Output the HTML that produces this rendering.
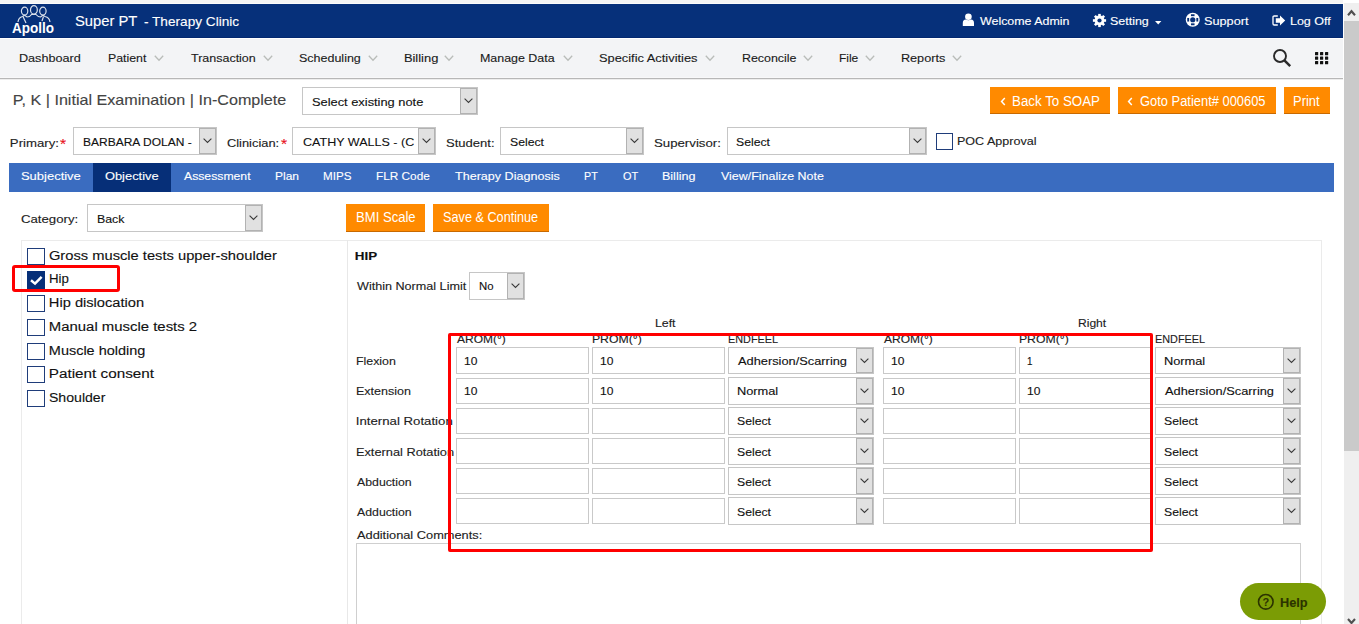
<!DOCTYPE html>
<html><head><meta charset="utf-8"><style>
html,body{margin:0;padding:0;width:1359px;height:624px;overflow:hidden;background:#fff;position:relative;font-family:'Liberation Sans',sans-serif}
div{white-space:nowrap}
</style></head><body>
<div style="position:absolute;left:0px;top:0px;width:1343px;height:3px;background:#f4f4f4"></div>
<div style="position:absolute;left:0px;top:3px;width:1343px;height:1px;background:#fbfbfb"></div>
<div style="position:absolute;left:0px;top:4px;width:1343px;height:34px;background:#06307a"></div>
<div style="position:absolute;left:0px;top:37px;width:1343px;height:1px;background:#032870"></div>
<div style="position:absolute;left:0px;top:38px;width:1343px;height:1px;background:#ffffff"></div>
<div style="position:absolute;left:0px;top:39px;width:1343px;height:38px;background:#f3f4f6"></div>
<div style="position:absolute;left:0px;top:77px;width:1343px;height:1px;background:#f8f8f9"></div>
<div style="position:absolute;left:0px;top:78px;width:1343px;height:1px;background:#b7b7b7"></div>
<div style="position:absolute;left:0px;top:79px;width:1343px;height:1px;background:#ededed"></div>
<svg style="position:absolute;left:0;top:0" width="70" height="38" viewBox="0 0 70 38">
<g fill="none" stroke="#fff" stroke-width="1.2" opacity="0.85">
<ellipse cx="24.6" cy="11.1" rx="3.2" ry="4"/><ellipse cx="33.9" cy="9.9" rx="3.4" ry="4.2"/><ellipse cx="42.9" cy="11.1" rx="3.2" ry="4"/>
<path d="M18 22 Q18.5 17.5 22.5 16.5 L24.6 15.3 L27 17 Q30 17 31.5 14.5 L36 14.5 Q38 17 40.5 17 L42.9 15.3 L45 16.5 Q49.5 17.5 50 22"/>
<path d="M23 16.5 L26 23 M43.5 16.5 L42 21"/>
</g>
<text x="12" y="33" textLength="42" lengthAdjust="spacingAndGlyphs" font-family="Liberation Sans" font-weight="bold" font-size="15.5" fill="#fff">Apollo</text>
</svg>
<svg style="position:absolute;left:962px;top:13px" width="13" height="14" viewBox="0 0 13 14"><circle cx="6.4" cy="3.7" r="3.3" fill="#fff"/><path d="M0.8 13 L0.8 10 Q0.8 6.8 3.8 6.6 Q6.4 8 9 6.6 Q12 6.8 12 10 L12 13 Z" fill="#fff"/></svg>
<svg style="position:absolute;left:1092px;top:12.5px" width="15" height="15" viewBox="-7.5 -7.5 15 15"><g fill="#fff"><rect x="-1.3" y="-6.6" width="2.6" height="3" transform="rotate(0)"/><rect x="-1.3" y="-6.6" width="2.6" height="3" transform="rotate(45)"/><rect x="-1.3" y="-6.6" width="2.6" height="3" transform="rotate(90)"/><rect x="-1.3" y="-6.6" width="2.6" height="3" transform="rotate(135)"/><rect x="-1.3" y="-6.6" width="2.6" height="3" transform="rotate(180)"/><rect x="-1.3" y="-6.6" width="2.6" height="3" transform="rotate(225)"/><rect x="-1.3" y="-6.6" width="2.6" height="3" transform="rotate(270)"/><rect x="-1.3" y="-6.6" width="2.6" height="3" transform="rotate(315)"/><circle r="4.9"/></g><circle r="2.1" fill="#06307a"/></svg>
<svg style="position:absolute;left:1154.5px;top:20.5px" width="7" height="4"><path d="M0 0 L6.4 0 L3.2 3.4 Z" fill="#fff"/></svg>
<svg style="position:absolute;left:1184.5px;top:12.2px" width="15.5" height="15.5" viewBox="-7.75 -7.75 15.5 15.5"><circle r="7.0" fill="#fff"/><circle r="2.6" fill="#06307a"/><rect x="-1.8" y="-5.5" width="3.6" height="1.9" fill="#06307a" transform="rotate(0)"/><rect x="-1.8" y="-5.5" width="3.6" height="1.9" fill="#06307a" transform="rotate(90)"/><rect x="-1.8" y="-5.5" width="3.6" height="1.9" fill="#06307a" transform="rotate(180)"/><rect x="-1.8" y="-5.5" width="3.6" height="1.9" fill="#06307a" transform="rotate(270)"/></svg>
<svg style="position:absolute;left:1272px;top:14.5px" width="14" height="11" viewBox="0 0 14 11"><path d="M5.8 1 L2.2 1 Q1 1 1 2.2 L1 8.8 Q1 10 2.2 10 L5.8 10" fill="none" stroke="#fff" stroke-width="1.3"/><path d="M3.8 3.3 L8 3.3 L8 0.4 L13.2 5.5 L8 10.6 L8 7.7 L3.8 7.7 Z" fill="#fff"/></svg>
<svg style="position:absolute;left:1272px;top:48px" width="21" height="20" viewBox="0 0 21 20"><circle cx="8" cy="8" r="6" fill="none" stroke="#2a2a2a" stroke-width="1.9"/><path d="M12.4 12.4 L18.2 18.2" stroke="#2a2a2a" stroke-width="2.5"/></svg>
<svg style="position:absolute;left:1315px;top:52px" width="14" height="14"><rect x="0" y="0.0" width="3.2" height="3.2" rx="0.5" fill="#111"/><rect x="0" y="4.5" width="3.2" height="3.2" rx="0.5" fill="#111"/><rect x="0" y="9.0" width="3.2" height="3.2" rx="0.5" fill="#111"/><rect x="5" y="0.0" width="3.2" height="3.2" rx="0.5" fill="#111"/><rect x="5" y="4.5" width="3.2" height="3.2" rx="0.5" fill="#111"/><rect x="5" y="9.0" width="3.2" height="3.2" rx="0.5" fill="#111"/><rect x="10" y="0.0" width="3.2" height="3.2" rx="0.5" fill="#111"/><rect x="10" y="4.5" width="3.2" height="3.2" rx="0.5" fill="#111"/><rect x="10" y="9.0" width="3.2" height="3.2" rx="0.5" fill="#111"/></svg>
<svg style="position:absolute;left:153.8px;top:55px" width="11" height="7"><path d="M0.8 0.8 L5 5.2 L9.2 0.8" fill="none" stroke="#b9bcb9" stroke-width="1.3"/></svg>
<svg style="position:absolute;left:263px;top:55px" width="11" height="7"><path d="M0.8 0.8 L5 5.2 L9.2 0.8" fill="none" stroke="#b9bcb9" stroke-width="1.3"/></svg>
<svg style="position:absolute;left:367.8px;top:55px" width="11" height="7"><path d="M0.8 0.8 L5 5.2 L9.2 0.8" fill="none" stroke="#b9bcb9" stroke-width="1.3"/></svg>
<svg style="position:absolute;left:444.4px;top:55px" width="11" height="7"><path d="M0.8 0.8 L5 5.2 L9.2 0.8" fill="none" stroke="#b9bcb9" stroke-width="1.3"/></svg>
<svg style="position:absolute;left:563.2px;top:55px" width="11" height="7"><path d="M0.8 0.8 L5 5.2 L9.2 0.8" fill="none" stroke="#b9bcb9" stroke-width="1.3"/></svg>
<svg style="position:absolute;left:705px;top:55px" width="11" height="7"><path d="M0.8 0.8 L5 5.2 L9.2 0.8" fill="none" stroke="#b9bcb9" stroke-width="1.3"/></svg>
<svg style="position:absolute;left:803px;top:55px" width="11" height="7"><path d="M0.8 0.8 L5 5.2 L9.2 0.8" fill="none" stroke="#b9bcb9" stroke-width="1.3"/></svg>
<svg style="position:absolute;left:865px;top:55px" width="11" height="7"><path d="M0.8 0.8 L5 5.2 L9.2 0.8" fill="none" stroke="#b9bcb9" stroke-width="1.3"/></svg>
<svg style="position:absolute;left:951.8px;top:55px" width="11" height="7"><path d="M0.8 0.8 L5 5.2 L9.2 0.8" fill="none" stroke="#b9bcb9" stroke-width="1.3"/></svg>
<div style="position:absolute;left:302px;top:87px;width:174px;height:26px;border:1px solid #c6c6c6;background:#fff"></div>
<div style="position:absolute;left:460px;top:88px;width:15px;height:24px;border:1px solid #b2b2b2;background:#e1e1e1"></div>
<svg style="position:absolute;left:464px;top:98.4px" width="10" height="6"><path d="M0.6 0.6 L4.5 4.5 L8.4 0.6" fill="none" stroke="#3a3a3a" stroke-width="1.1"/></svg>
<div style="position:absolute;left:990px;top:87px;width:120px;height:26px;background:#ff8a00;border-bottom:1px solid #c86900"></div>
<svg style="position:absolute;left:999.5px;top:96.9px" width="7" height="9"><path d="M4.8 1 L1.6 4.5 L4.8 8" fill="none" stroke="#fff" stroke-width="1.5"/></svg>
<div style="position:absolute;left:1118px;top:87px;width:158px;height:26px;background:#ff8a00;border-bottom:1px solid #c86900"></div>
<svg style="position:absolute;left:1127px;top:96.9px" width="7" height="9"><path d="M4.8 1 L1.6 4.5 L4.8 8" fill="none" stroke="#fff" stroke-width="1.5"/></svg>
<div style="position:absolute;left:1284px;top:87px;width:46px;height:26px;background:#ff8a00;border-bottom:1px solid #c86900"></div>
<div style="position:absolute;left:73px;top:127px;width:142px;height:26px;border:1px solid #c6c6c6;background:#fff"></div>
<div style="position:absolute;left:199px;top:128px;width:15px;height:24px;border:1px solid #b2b2b2;background:#e1e1e1"></div>
<svg style="position:absolute;left:203px;top:138.4px" width="10" height="6"><path d="M0.6 0.6 L4.5 4.5 L8.4 0.6" fill="none" stroke="#3a3a3a" stroke-width="1.1"/></svg>
<div style="position:absolute;left:292px;top:127px;width:142px;height:26px;border:1px solid #c6c6c6;background:#fff"></div>
<div style="position:absolute;left:418px;top:128px;width:15px;height:24px;border:1px solid #b2b2b2;background:#e1e1e1"></div>
<svg style="position:absolute;left:422px;top:138.4px" width="10" height="6"><path d="M0.6 0.6 L4.5 4.5 L8.4 0.6" fill="none" stroke="#3a3a3a" stroke-width="1.1"/></svg>
<div style="position:absolute;left:293px;top:128px;width:121px;height:26px;overflow:hidden"><div style="position:absolute;left:9.5px;top:1px;white-space:nowrap;font-family:'Liberation Sans';font-size:11.5px;line-height:26px;color:#111;transform:scaleX(1.09);transform-origin:0 0;-webkit-text-stroke:0.08px currentColor">CATHY WALLS - (CW)</div></div>
<div style="position:absolute;left:500px;top:127px;width:142px;height:26px;border:1px solid #c6c6c6;background:#fff"></div>
<div style="position:absolute;left:626px;top:128px;width:15px;height:24px;border:1px solid #b2b2b2;background:#e1e1e1"></div>
<svg style="position:absolute;left:630px;top:138.4px" width="10" height="6"><path d="M0.6 0.6 L4.5 4.5 L8.4 0.6" fill="none" stroke="#3a3a3a" stroke-width="1.1"/></svg>
<div style="position:absolute;left:727px;top:127px;width:198px;height:26px;border:1px solid #c6c6c6;background:#fff"></div>
<div style="position:absolute;left:909px;top:128px;width:15px;height:24px;border:1px solid #b2b2b2;background:#e1e1e1"></div>
<svg style="position:absolute;left:913px;top:138.4px" width="10" height="6"><path d="M0.6 0.6 L4.5 4.5 L8.4 0.6" fill="none" stroke="#3a3a3a" stroke-width="1.1"/></svg>
<div style="position:absolute;left:936px;top:133px;width:14.5px;height:14.5px;border:1.25px solid #1f3d7a;background:#fff"></div>
<div style="position:absolute;left:9px;top:163px;width:1325px;height:29px;background:#3a6cc0"></div>
<div style="position:absolute;left:93px;top:163px;width:78px;height:29px;background:#062f78"></div>
<div style="position:absolute;left:87px;top:204px;width:174px;height:26px;border:1px solid #c6c6c6;background:#fff"></div>
<div style="position:absolute;left:245px;top:205px;width:15px;height:24px;border:1px solid #b2b2b2;background:#e1e1e1"></div>
<svg style="position:absolute;left:249px;top:215.4px" width="10" height="6"><path d="M0.6 0.6 L4.5 4.5 L8.4 0.6" fill="none" stroke="#3a3a3a" stroke-width="1.1"/></svg>
<div style="position:absolute;left:346px;top:204px;width:79px;height:27px;background:#ff8a00;border-bottom:1px solid #c86900"></div>
<div style="position:absolute;left:433px;top:204px;width:116px;height:27px;background:#ff8a00;border-bottom:1px solid #c86900"></div>
<div style="position:absolute;left:21px;top:240px;width:1301px;height:1px;background:#ebebeb"></div>
<div style="position:absolute;left:21px;top:240px;width:1px;height:384px;background:#ebebeb"></div>
<div style="position:absolute;left:347px;top:240px;width:1px;height:384px;background:#e8e8e8"></div>
<div style="position:absolute;left:1321px;top:240px;width:1px;height:384px;background:#ebebeb"></div>
<div style="position:absolute;left:27px;top:248px;width:15.5px;height:14.5px;border:1.25px solid #1f3d7a;background:#fff"></div>
<div style="position:absolute;left:27px;top:271px;width:18px;height:18px;background:#062f78"></div>
<svg style="position:absolute;left:27px;top:271px" width="18" height="17"><path d="M4 9.3 L8 12.6 L14.6 5.8" fill="none" stroke="#fff" stroke-width="2.5"/></svg>
<div style="position:absolute;left:27px;top:295px;width:15.5px;height:14.5px;border:1.25px solid #1f3d7a;background:#fff"></div>
<div style="position:absolute;left:27px;top:319px;width:15.5px;height:14.5px;border:1.25px solid #1f3d7a;background:#fff"></div>
<div style="position:absolute;left:27px;top:343px;width:15.5px;height:14.5px;border:1.25px solid #1f3d7a;background:#fff"></div>
<div style="position:absolute;left:27px;top:366px;width:15.5px;height:14.5px;border:1.25px solid #1f3d7a;background:#fff"></div>
<div style="position:absolute;left:27px;top:390px;width:15.5px;height:14.5px;border:1.25px solid #1f3d7a;background:#fff"></div>
<div style="position:absolute;left:469px;top:272px;width:54px;height:26px;border:1px solid #c6c6c6;background:#fff"></div>
<div style="position:absolute;left:507px;top:273px;width:15px;height:24px;border:1px solid #b2b2b2;background:#e1e1e1"></div>
<svg style="position:absolute;left:511px;top:283.4px" width="10" height="6"><path d="M0.6 0.6 L4.5 4.5 L8.4 0.6" fill="none" stroke="#3a3a3a" stroke-width="1.1"/></svg>
<div style="position:absolute;left:456px;top:347px;width:131px;height:25px;border:1px solid #c9c9c9;background:#fff"></div>
<div style="position:absolute;left:592px;top:347px;width:131px;height:25px;border:1px solid #c9c9c9;background:#fff"></div>
<div style="position:absolute;left:728px;top:347px;width:144px;height:25px;border:1px solid #c6c6c6;background:#fff"></div>
<div style="position:absolute;left:856px;top:348px;width:15px;height:23px;border:1px solid #b2b2b2;background:#e1e1e1"></div>
<svg style="position:absolute;left:860px;top:357.9px" width="10" height="6"><path d="M0.6 0.6 L4.5 4.5 L8.4 0.6" fill="none" stroke="#3a3a3a" stroke-width="1.1"/></svg>
<div style="position:absolute;left:883px;top:347px;width:131px;height:25px;border:1px solid #c9c9c9;background:#fff"></div>
<div style="position:absolute;left:1019px;top:347px;width:131px;height:25px;border:1px solid #c9c9c9;background:#fff"></div>
<div style="position:absolute;left:1155px;top:347px;width:144px;height:25px;border:1px solid #c6c6c6;background:#fff"></div>
<div style="position:absolute;left:1283px;top:348px;width:15px;height:23px;border:1px solid #b2b2b2;background:#e1e1e1"></div>
<svg style="position:absolute;left:1287px;top:357.9px" width="10" height="6"><path d="M0.6 0.6 L4.5 4.5 L8.4 0.6" fill="none" stroke="#3a3a3a" stroke-width="1.1"/></svg>
<div style="position:absolute;left:456px;top:378px;width:131px;height:24px;border:1px solid #c9c9c9;background:#fff"></div>
<div style="position:absolute;left:592px;top:378px;width:131px;height:24px;border:1px solid #c9c9c9;background:#fff"></div>
<div style="position:absolute;left:728px;top:377px;width:144px;height:26px;border:1px solid #c6c6c6;background:#fff"></div>
<div style="position:absolute;left:856px;top:378px;width:15px;height:24px;border:1px solid #b2b2b2;background:#e1e1e1"></div>
<svg style="position:absolute;left:860px;top:388.4px" width="10" height="6"><path d="M0.6 0.6 L4.5 4.5 L8.4 0.6" fill="none" stroke="#3a3a3a" stroke-width="1.1"/></svg>
<div style="position:absolute;left:883px;top:378px;width:131px;height:24px;border:1px solid #c9c9c9;background:#fff"></div>
<div style="position:absolute;left:1019px;top:378px;width:131px;height:24px;border:1px solid #c9c9c9;background:#fff"></div>
<div style="position:absolute;left:1155px;top:377px;width:144px;height:26px;border:1px solid #c6c6c6;background:#fff"></div>
<div style="position:absolute;left:1283px;top:378px;width:15px;height:24px;border:1px solid #b2b2b2;background:#e1e1e1"></div>
<svg style="position:absolute;left:1287px;top:388.4px" width="10" height="6"><path d="M0.6 0.6 L4.5 4.5 L8.4 0.6" fill="none" stroke="#3a3a3a" stroke-width="1.1"/></svg>
<div style="position:absolute;left:456px;top:408px;width:131px;height:24px;border:1px solid #c9c9c9;background:#fff"></div>
<div style="position:absolute;left:592px;top:408px;width:131px;height:24px;border:1px solid #c9c9c9;background:#fff"></div>
<div style="position:absolute;left:728px;top:407px;width:144px;height:26px;border:1px solid #c6c6c6;background:#fff"></div>
<div style="position:absolute;left:856px;top:408px;width:15px;height:24px;border:1px solid #b2b2b2;background:#e1e1e1"></div>
<svg style="position:absolute;left:860px;top:418.4px" width="10" height="6"><path d="M0.6 0.6 L4.5 4.5 L8.4 0.6" fill="none" stroke="#3a3a3a" stroke-width="1.1"/></svg>
<div style="position:absolute;left:883px;top:408px;width:131px;height:24px;border:1px solid #c9c9c9;background:#fff"></div>
<div style="position:absolute;left:1019px;top:408px;width:131px;height:24px;border:1px solid #c9c9c9;background:#fff"></div>
<div style="position:absolute;left:1155px;top:407px;width:144px;height:26px;border:1px solid #c6c6c6;background:#fff"></div>
<div style="position:absolute;left:1283px;top:408px;width:15px;height:24px;border:1px solid #b2b2b2;background:#e1e1e1"></div>
<svg style="position:absolute;left:1287px;top:418.4px" width="10" height="6"><path d="M0.6 0.6 L4.5 4.5 L8.4 0.6" fill="none" stroke="#3a3a3a" stroke-width="1.1"/></svg>
<div style="position:absolute;left:456px;top:438px;width:131px;height:24px;border:1px solid #c9c9c9;background:#fff"></div>
<div style="position:absolute;left:592px;top:438px;width:131px;height:24px;border:1px solid #c9c9c9;background:#fff"></div>
<div style="position:absolute;left:728px;top:437px;width:144px;height:26px;border:1px solid #c6c6c6;background:#fff"></div>
<div style="position:absolute;left:856px;top:438px;width:15px;height:24px;border:1px solid #b2b2b2;background:#e1e1e1"></div>
<svg style="position:absolute;left:860px;top:448.4px" width="10" height="6"><path d="M0.6 0.6 L4.5 4.5 L8.4 0.6" fill="none" stroke="#3a3a3a" stroke-width="1.1"/></svg>
<div style="position:absolute;left:883px;top:438px;width:131px;height:24px;border:1px solid #c9c9c9;background:#fff"></div>
<div style="position:absolute;left:1019px;top:438px;width:131px;height:24px;border:1px solid #c9c9c9;background:#fff"></div>
<div style="position:absolute;left:1155px;top:437px;width:144px;height:26px;border:1px solid #c6c6c6;background:#fff"></div>
<div style="position:absolute;left:1283px;top:438px;width:15px;height:24px;border:1px solid #b2b2b2;background:#e1e1e1"></div>
<svg style="position:absolute;left:1287px;top:448.4px" width="10" height="6"><path d="M0.6 0.6 L4.5 4.5 L8.4 0.6" fill="none" stroke="#3a3a3a" stroke-width="1.1"/></svg>
<div style="position:absolute;left:456px;top:468px;width:131px;height:24px;border:1px solid #c9c9c9;background:#fff"></div>
<div style="position:absolute;left:592px;top:468px;width:131px;height:24px;border:1px solid #c9c9c9;background:#fff"></div>
<div style="position:absolute;left:728px;top:467px;width:144px;height:26px;border:1px solid #c6c6c6;background:#fff"></div>
<div style="position:absolute;left:856px;top:468px;width:15px;height:24px;border:1px solid #b2b2b2;background:#e1e1e1"></div>
<svg style="position:absolute;left:860px;top:478.4px" width="10" height="6"><path d="M0.6 0.6 L4.5 4.5 L8.4 0.6" fill="none" stroke="#3a3a3a" stroke-width="1.1"/></svg>
<div style="position:absolute;left:883px;top:468px;width:131px;height:24px;border:1px solid #c9c9c9;background:#fff"></div>
<div style="position:absolute;left:1019px;top:468px;width:131px;height:24px;border:1px solid #c9c9c9;background:#fff"></div>
<div style="position:absolute;left:1155px;top:467px;width:144px;height:26px;border:1px solid #c6c6c6;background:#fff"></div>
<div style="position:absolute;left:1283px;top:468px;width:15px;height:24px;border:1px solid #b2b2b2;background:#e1e1e1"></div>
<svg style="position:absolute;left:1287px;top:478.4px" width="10" height="6"><path d="M0.6 0.6 L4.5 4.5 L8.4 0.6" fill="none" stroke="#3a3a3a" stroke-width="1.1"/></svg>
<div style="position:absolute;left:456px;top:498px;width:131px;height:24px;border:1px solid #c9c9c9;background:#fff"></div>
<div style="position:absolute;left:592px;top:498px;width:131px;height:24px;border:1px solid #c9c9c9;background:#fff"></div>
<div style="position:absolute;left:728px;top:497px;width:144px;height:26px;border:1px solid #c6c6c6;background:#fff"></div>
<div style="position:absolute;left:856px;top:498px;width:15px;height:24px;border:1px solid #b2b2b2;background:#e1e1e1"></div>
<svg style="position:absolute;left:860px;top:508.4px" width="10" height="6"><path d="M0.6 0.6 L4.5 4.5 L8.4 0.6" fill="none" stroke="#3a3a3a" stroke-width="1.1"/></svg>
<div style="position:absolute;left:883px;top:498px;width:131px;height:24px;border:1px solid #c9c9c9;background:#fff"></div>
<div style="position:absolute;left:1019px;top:498px;width:131px;height:24px;border:1px solid #c9c9c9;background:#fff"></div>
<div style="position:absolute;left:1155px;top:497px;width:144px;height:26px;border:1px solid #c6c6c6;background:#fff"></div>
<div style="position:absolute;left:1283px;top:498px;width:15px;height:24px;border:1px solid #b2b2b2;background:#e1e1e1"></div>
<svg style="position:absolute;left:1287px;top:508.4px" width="10" height="6"><path d="M0.6 0.6 L4.5 4.5 L8.4 0.6" fill="none" stroke="#3a3a3a" stroke-width="1.1"/></svg>
<div style="position:absolute;left:356px;top:543px;width:945px;height:100px;border:1px solid #cfcfcf;background:#fff;box-sizing:border-box"></div>
<div style="position:absolute;left:75.15px;top:11.95px;font-size:14px;line-height:18px;font-weight:normal;color:#fff;transform:scaleX(1.0552);transform-origin:0.75px 0;-webkit-text-stroke:0.12px currentColor;">Super PT</div>
<div style="position:absolute;left:143.90px;top:12.80px;font-size:13px;line-height:17px;font-weight:normal;color:#fff;transform:scaleX(1.0478);transform-origin:0.50px 0;-webkit-text-stroke:0.12px currentColor;">- Therapy Clinic</div>
<div style="position:absolute;left:979.50px;top:14.32px;font-size:11.5px;line-height:15px;font-weight:normal;color:#fff;transform:scaleX(1.0796);transform-origin:0.00px 0;-webkit-text-stroke:0.12px currentColor;">Welcome Admin</div>
<div style="position:absolute;left:1110.30px;top:14.32px;font-size:11.5px;line-height:15px;font-weight:normal;color:#fff;transform:scaleX(1.0849);transform-origin:0.50px 0;-webkit-text-stroke:0.12px currentColor;">Setting</div>
<div style="position:absolute;left:1204.00px;top:14.32px;font-size:11.5px;line-height:15px;font-weight:normal;color:#fff;transform:scaleX(1.1069);transform-origin:0.50px 0;-webkit-text-stroke:0.12px currentColor;">Support</div>
<div style="position:absolute;left:1290.00px;top:14.32px;font-size:11.5px;line-height:15px;font-weight:normal;color:#fff;transform:scaleX(1.0904);transform-origin:1.00px 0;-webkit-text-stroke:0.12px currentColor;">Log Off</div>
<div style="position:absolute;left:18.90px;top:51.32px;font-size:11.5px;line-height:15px;font-weight:normal;color:#1b1b1b;transform:scaleX(1.1009);transform-origin:1.00px 0;-webkit-text-stroke:0.12px currentColor;">Dashboard</div>
<div style="position:absolute;left:107.80px;top:51.32px;font-size:11.5px;line-height:15px;font-weight:normal;color:#1b1b1b;transform:scaleX(1.0734);transform-origin:1.00px 0;-webkit-text-stroke:0.12px currentColor;">Patient</div>
<div style="position:absolute;left:190.85px;top:51.32px;font-size:11.5px;line-height:15px;font-weight:normal;color:#1b1b1b;transform:scaleX(1.0860);transform-origin:0.25px 0;-webkit-text-stroke:0.12px currentColor;">Transaction</div>
<div style="position:absolute;left:299.00px;top:51.32px;font-size:11.5px;line-height:15px;font-weight:normal;color:#1b1b1b;transform:scaleX(1.0870);transform-origin:0.50px 0;-webkit-text-stroke:0.12px currentColor;">Scheduling</div>
<div style="position:absolute;left:403.70px;top:51.32px;font-size:11.5px;line-height:15px;font-weight:normal;color:#1b1b1b;transform:scaleX(1.1241);transform-origin:1.00px 0;-webkit-text-stroke:0.12px currentColor;">Billing</div>
<div style="position:absolute;left:480.20px;top:51.32px;font-size:11.5px;line-height:15px;font-weight:normal;color:#1b1b1b;transform:scaleX(1.0824);transform-origin:1.00px 0;-webkit-text-stroke:0.12px currentColor;">Manage Data</div>
<div style="position:absolute;left:599.40px;top:51.32px;font-size:11.5px;line-height:15px;font-weight:normal;color:#1b1b1b;transform:scaleX(1.1175);transform-origin:0.50px 0;-webkit-text-stroke:0.12px currentColor;">Specific Activities</div>
<div style="position:absolute;left:741.50px;top:51.32px;font-size:11.5px;line-height:15px;font-weight:normal;color:#1b1b1b;transform:scaleX(1.0816);transform-origin:1.00px 0;-webkit-text-stroke:0.12px currentColor;">Reconcile</div>
<div style="position:absolute;left:838.50px;top:51.32px;font-size:11.5px;line-height:15px;font-weight:normal;color:#1b1b1b;transform:scaleX(1.0412);transform-origin:1.00px 0;-webkit-text-stroke:0.12px currentColor;">File</div>
<div style="position:absolute;left:900.50px;top:51.32px;font-size:11.5px;line-height:15px;font-weight:normal;color:#1b1b1b;transform:scaleX(1.1026);transform-origin:1.00px 0;-webkit-text-stroke:0.12px currentColor;">Reports</div>
<div style="position:absolute;left:12.65px;top:91.28px;font-size:14.5px;line-height:19px;font-weight:normal;color:#444;transform:scaleX(1.1123);transform-origin:1.25px 0;-webkit-text-stroke:0.12px currentColor;">P, K | Initial Examination | In-Complete</div>
<div style="position:absolute;left:312.40px;top:95.32px;font-size:11.5px;line-height:15px;font-weight:normal;color:#111;transform:scaleX(1.1170);transform-origin:0.50px 0;-webkit-text-stroke:0.12px currentColor;">Select existing note</div>
<div style="position:absolute;left:1012.30px;top:91.65px;font-size:14px;line-height:18px;font-weight:normal;color:#fff;transform:scaleX(0.9525);transform-origin:1.00px 0;-webkit-text-stroke:0.12px currentColor;-webkit-text-stroke:0;">Back To SOAP</div>
<div style="position:absolute;left:1139.75px;top:91.65px;font-size:14px;line-height:18px;font-weight:normal;color:#fff;transform:scaleX(0.9207);transform-origin:0.75px 0;-webkit-text-stroke:0.12px currentColor;-webkit-text-stroke:0;">Goto Patient# 000605</div>
<div style="position:absolute;left:1293.20px;top:91.65px;font-size:14px;line-height:18px;font-weight:normal;color:#fff;transform:scaleX(0.9225);transform-origin:1.00px 0;-webkit-text-stroke:0.12px currentColor;-webkit-text-stroke:0;">Print</div>
<div style="position:absolute;left:10.10px;top:136.32px;font-size:11.5px;line-height:15px;font-weight:normal;color:#222;transform:scaleX(1.1460);transform-origin:1.00px 0;-webkit-text-stroke:0.12px currentColor;">Primary:</div>
<div style="position:absolute;left:60.25px;top:134.55px;font-size:14px;line-height:18px;font-weight:normal;color:#e8101a;transform:scaleX(1.1200);transform-origin:0.25px 0;-webkit-text-stroke:0.12px currentColor;">*</div>
<div style="position:absolute;left:82.90px;top:135.32px;font-size:11.5px;line-height:15px;font-weight:normal;color:#111;transform:scaleX(1.0433);transform-origin:1.00px 0;-webkit-text-stroke:0.12px currentColor;">BARBARA DOLAN -</div>
<div style="position:absolute;left:227.40px;top:136.32px;font-size:11.5px;line-height:15px;font-weight:normal;color:#222;transform:scaleX(1.1182);transform-origin:0.50px 0;-webkit-text-stroke:0.12px currentColor;">Clinician:</div>
<div style="position:absolute;left:280.65px;top:134.55px;font-size:14px;line-height:18px;font-weight:normal;color:#e8101a;transform:scaleX(1.1200);transform-origin:0.25px 0;-webkit-text-stroke:0.12px currentColor;">*</div>
<div style="position:absolute;left:446.30px;top:136.32px;font-size:11.5px;line-height:15px;font-weight:normal;color:#222;transform:scaleX(1.1345);transform-origin:0.50px 0;-webkit-text-stroke:0.12px currentColor;">Student:</div>
<div style="position:absolute;left:510.30px;top:135.32px;font-size:11.5px;line-height:15px;font-weight:normal;color:#111;transform:scaleX(1.0635);transform-origin:0.50px 0;-webkit-text-stroke:0.12px currentColor;">Select</div>
<div style="position:absolute;left:653.90px;top:136.32px;font-size:11.5px;line-height:15px;font-weight:normal;color:#222;transform:scaleX(1.1524);transform-origin:0.50px 0;-webkit-text-stroke:0.12px currentColor;">Supervisor:</div>
<div style="position:absolute;left:736.40px;top:135.32px;font-size:11.5px;line-height:15px;font-weight:normal;color:#111;transform:scaleX(1.0635);transform-origin:0.50px 0;-webkit-text-stroke:0.12px currentColor;">Select</div>
<div style="position:absolute;left:956.90px;top:133.62px;font-size:11.5px;line-height:15px;font-weight:normal;color:#222;transform:scaleX(1.0919);transform-origin:1.00px 0;-webkit-text-stroke:0.12px currentColor;">POC Approval</div>
<div style="position:absolute;left:21.20px;top:169.32px;font-size:11.5px;line-height:15px;font-weight:normal;color:#fff;transform:scaleX(1.1288);transform-origin:0.50px 0;-webkit-text-stroke:0.12px currentColor;">Subjective</div>
<div style="position:absolute;left:105.40px;top:169.32px;font-size:11.5px;line-height:15px;font-weight:normal;color:#fff;transform:scaleX(1.1191);transform-origin:0.50px 0;-webkit-text-stroke:0.12px currentColor;">Objective</div>
<div style="position:absolute;left:183.70px;top:169.32px;font-size:11.5px;line-height:15px;font-weight:normal;color:#fff;transform:scaleX(1.0624);transform-origin:0.00px 0;-webkit-text-stroke:0.12px currentColor;">Assessment</div>
<div style="position:absolute;left:275.00px;top:169.32px;font-size:11.5px;line-height:15px;font-weight:normal;color:#fff;transform:scaleX(1.0447);transform-origin:1.00px 0;-webkit-text-stroke:0.12px currentColor;">Plan</div>
<div style="position:absolute;left:322.90px;top:169.32px;font-size:11.5px;line-height:15px;font-weight:normal;color:#fff;transform:scaleX(1.0131);transform-origin:1.00px 0;-webkit-text-stroke:0.12px currentColor;">MIPS</div>
<div style="position:absolute;left:375.90px;top:169.32px;font-size:11.5px;line-height:15px;font-weight:normal;color:#fff;transform:scaleX(1.0275);transform-origin:1.00px 0;-webkit-text-stroke:0.12px currentColor;">FLR Code</div>
<div style="position:absolute;left:454.85px;top:169.32px;font-size:11.5px;line-height:15px;font-weight:normal;color:#fff;transform:scaleX(1.0929);transform-origin:0.25px 0;-webkit-text-stroke:0.12px currentColor;">Therapy Diagnosis</div>
<div style="position:absolute;left:583.90px;top:169.32px;font-size:11.5px;line-height:15px;font-weight:normal;color:#fff;transform:scaleX(0.9333);transform-origin:1.00px 0;-webkit-text-stroke:0.12px currentColor;">PT</div>
<div style="position:absolute;left:622.50px;top:169.32px;font-size:11.5px;line-height:15px;font-weight:normal;color:#fff;transform:scaleX(0.9508);transform-origin:0.50px 0;-webkit-text-stroke:0.12px currentColor;">OT</div>
<div style="position:absolute;left:662.20px;top:169.32px;font-size:11.5px;line-height:15px;font-weight:normal;color:#fff;transform:scaleX(1.0966);transform-origin:1.00px 0;-webkit-text-stroke:0.12px currentColor;">Billing</div>
<div style="position:absolute;left:720.90px;top:169.32px;font-size:11.5px;line-height:15px;font-weight:normal;color:#fff;transform:scaleX(1.0825);transform-origin:0.00px 0;-webkit-text-stroke:0.12px currentColor;">View/Finalize Note</div>
<div style="position:absolute;left:21.30px;top:212.32px;font-size:11.5px;line-height:15px;font-weight:normal;color:#222;transform:scaleX(1.1485);transform-origin:0.50px 0;-webkit-text-stroke:0.12px currentColor;">Category:</div>
<div style="position:absolute;left:96.90px;top:212.32px;font-size:11.5px;line-height:15px;font-weight:normal;color:#111;transform:scaleX(1.0776);transform-origin:1.00px 0;-webkit-text-stroke:0.12px currentColor;">Back</div>
<div style="position:absolute;left:355.70px;top:208.25px;font-size:14px;line-height:18px;font-weight:normal;color:#fff;transform:scaleX(0.9333);transform-origin:1.00px 0;-webkit-text-stroke:0.12px currentColor;-webkit-text-stroke:0;">BMI Scale</div>
<div style="position:absolute;left:443.15px;top:208.25px;font-size:14px;line-height:18px;font-weight:normal;color:#fff;transform:scaleX(0.9051);transform-origin:0.75px 0;-webkit-text-stroke:0.12px currentColor;-webkit-text-stroke:0;">Save & Continue</div>
<div style="position:absolute;left:49.30px;top:248.07px;font-size:12.5px;line-height:16px;font-weight:normal;color:#111;transform:scaleX(1.1762);transform-origin:0.50px 0;-webkit-text-stroke:0.12px currentColor;">Gross muscle tests upper-shoulder</div>
<div style="position:absolute;left:48.80px;top:271.07px;font-size:12.5px;line-height:16px;font-weight:normal;color:#111;transform:scaleX(1.0609);transform-origin:1.00px 0;-webkit-text-stroke:0.12px currentColor;">Hip</div>
<div style="position:absolute;left:48.80px;top:295.07px;font-size:12.5px;line-height:16px;font-weight:normal;color:#111;transform:scaleX(1.1723);transform-origin:1.00px 0;-webkit-text-stroke:0.12px currentColor;">Hip dislocation</div>
<div style="position:absolute;left:48.80px;top:319.07px;font-size:12.5px;line-height:16px;font-weight:normal;color:#111;transform:scaleX(1.1927);transform-origin:1.00px 0;-webkit-text-stroke:0.12px currentColor;">Manual muscle tests 2</div>
<div style="position:absolute;left:48.80px;top:343.07px;font-size:12.5px;line-height:16px;font-weight:normal;color:#111;transform:scaleX(1.1571);transform-origin:1.00px 0;-webkit-text-stroke:0.12px currentColor;">Muscle holding</div>
<div style="position:absolute;left:48.80px;top:366.07px;font-size:12.5px;line-height:16px;font-weight:normal;color:#111;transform:scaleX(1.2212);transform-origin:1.00px 0;-webkit-text-stroke:0.12px currentColor;">Patient consent</div>
<div style="position:absolute;left:49.30px;top:390.07px;font-size:12.5px;line-height:16px;font-weight:normal;color:#111;transform:scaleX(1.1289);transform-origin:0.50px 0;-webkit-text-stroke:0.12px currentColor;">Shoulder</div>
<div style="position:absolute;left:354.65px;top:249.19px;font-size:11px;line-height:14px;font-weight:bold;color:#111;transform:scaleX(1.2174);transform-origin:0.75px 0;-webkit-text-stroke:0.12px currentColor;">HIP</div>
<div style="position:absolute;left:357.20px;top:279.32px;font-size:11.5px;line-height:15px;font-weight:normal;color:#222;transform:scaleX(1.0957);transform-origin:0.00px 0;-webkit-text-stroke:0.12px currentColor;">Within Normal Limit</div>
<div style="position:absolute;left:478.70px;top:279.32px;font-size:11.5px;line-height:15px;font-weight:normal;color:#111;transform:scaleX(0.9887);transform-origin:1.00px 0;-webkit-text-stroke:0.12px currentColor;">No</div>
<div style="position:absolute;left:654.70px;top:316.32px;font-size:11.5px;line-height:15px;font-weight:normal;color:#222;transform:scaleX(1.0740);transform-origin:1.00px 0;-webkit-text-stroke:0.12px currentColor;">Left</div>
<div style="position:absolute;left:1078.00px;top:316.32px;font-size:11.5px;line-height:15px;font-weight:normal;color:#222;transform:scaleX(1.0524);transform-origin:1.00px 0;-webkit-text-stroke:0.12px currentColor;">Right</div>
<div style="position:absolute;left:457.10px;top:331.82px;font-size:11.5px;line-height:15px;font-weight:normal;color:#222;transform:scaleX(1.0435);transform-origin:0.00px 0;-webkit-text-stroke:0.12px currentColor;">AROM(°)</div>
<div style="position:absolute;left:884.00px;top:331.82px;font-size:11.5px;line-height:15px;font-weight:normal;color:#222;transform:scaleX(1.0435);transform-origin:0.00px 0;-webkit-text-stroke:0.12px currentColor;">AROM(°)</div>
<div style="position:absolute;left:591.80px;top:331.82px;font-size:11.5px;line-height:15px;font-weight:normal;color:#222;transform:scaleX(1.0667);transform-origin:1.00px 0;-webkit-text-stroke:0.12px currentColor;">PROM(°)</div>
<div style="position:absolute;left:1019.00px;top:331.82px;font-size:11.5px;line-height:15px;font-weight:normal;color:#222;transform:scaleX(1.0667);transform-origin:1.00px 0;-webkit-text-stroke:0.12px currentColor;">PROM(°)</div>
<div style="position:absolute;left:727.70px;top:331.82px;font-size:11.5px;line-height:15px;font-weight:normal;color:#222;transform:scaleX(0.9430);transform-origin:1.00px 0;-webkit-text-stroke:0.12px currentColor;">ENDFEEL</div>
<div style="position:absolute;left:1154.70px;top:331.82px;font-size:11.5px;line-height:15px;font-weight:normal;color:#222;transform:scaleX(0.9430);transform-origin:1.00px 0;-webkit-text-stroke:0.12px currentColor;">ENDFEEL</div>
<div style="position:absolute;left:356.00px;top:354.32px;font-size:11.5px;line-height:15px;font-weight:normal;color:#222;transform:scaleX(1.0789);transform-origin:1.00px 0;-webkit-text-stroke:0.12px currentColor;">Flexion</div>
<div style="position:absolute;left:463.55px;top:354.32px;font-size:11.5px;line-height:15px;font-weight:normal;color:#111;transform:scaleX(1.0435);transform-origin:0.75px 0;-webkit-text-stroke:0.12px currentColor;">10</div>
<div style="position:absolute;left:599.55px;top:354.32px;font-size:11.5px;line-height:15px;font-weight:normal;color:#111;transform:scaleX(1.0435);transform-origin:0.75px 0;-webkit-text-stroke:0.12px currentColor;">10</div>
<div style="position:absolute;left:737.70px;top:354.32px;font-size:11.5px;line-height:15px;font-weight:normal;color:#111;transform:scaleX(1.1144);transform-origin:0.00px 0;-webkit-text-stroke:0.12px currentColor;">Adhersion/Scarring</div>
<div style="position:absolute;left:890.55px;top:354.32px;font-size:11.5px;line-height:15px;font-weight:normal;color:#111;transform:scaleX(1.0435);transform-origin:0.75px 0;-webkit-text-stroke:0.12px currentColor;">10</div>
<div style="position:absolute;left:1026.55px;top:354.32px;font-size:11.5px;line-height:15px;font-weight:normal;color:#111;transform:scaleX(0.8571);transform-origin:0.75px 0;-webkit-text-stroke:0.12px currentColor;">1</div>
<div style="position:absolute;left:1163.70px;top:354.32px;font-size:11.5px;line-height:15px;font-weight:normal;color:#111;transform:scaleX(1.1149);transform-origin:1.00px 0;-webkit-text-stroke:0.12px currentColor;">Normal</div>
<div style="position:absolute;left:356.00px;top:384.32px;font-size:11.5px;line-height:15px;font-weight:normal;color:#222;transform:scaleX(1.0892);transform-origin:1.00px 0;-webkit-text-stroke:0.12px currentColor;">Extension</div>
<div style="position:absolute;left:463.55px;top:384.32px;font-size:11.5px;line-height:15px;font-weight:normal;color:#111;transform:scaleX(1.0435);transform-origin:0.75px 0;-webkit-text-stroke:0.12px currentColor;">10</div>
<div style="position:absolute;left:599.55px;top:384.32px;font-size:11.5px;line-height:15px;font-weight:normal;color:#111;transform:scaleX(1.0435);transform-origin:0.75px 0;-webkit-text-stroke:0.12px currentColor;">10</div>
<div style="position:absolute;left:736.70px;top:384.32px;font-size:11.5px;line-height:15px;font-weight:normal;color:#111;transform:scaleX(1.1149);transform-origin:1.00px 0;-webkit-text-stroke:0.12px currentColor;">Normal</div>
<div style="position:absolute;left:890.55px;top:384.32px;font-size:11.5px;line-height:15px;font-weight:normal;color:#111;transform:scaleX(1.0435);transform-origin:0.75px 0;-webkit-text-stroke:0.12px currentColor;">10</div>
<div style="position:absolute;left:1026.55px;top:384.32px;font-size:11.5px;line-height:15px;font-weight:normal;color:#111;transform:scaleX(1.0435);transform-origin:0.75px 0;-webkit-text-stroke:0.12px currentColor;">10</div>
<div style="position:absolute;left:1164.70px;top:384.32px;font-size:11.5px;line-height:15px;font-weight:normal;color:#111;transform:scaleX(1.1144);transform-origin:0.00px 0;-webkit-text-stroke:0.12px currentColor;">Adhersion/Scarring</div>
<div style="position:absolute;left:356.00px;top:414.32px;font-size:11.5px;line-height:15px;font-weight:normal;color:#222;transform:scaleX(1.1480);transform-origin:1.00px 0;-webkit-text-stroke:0.12px currentColor;">Internal Rotation</div>
<div style="position:absolute;left:737.20px;top:414.32px;font-size:11.5px;line-height:15px;font-weight:normal;color:#111;transform:scaleX(1.0635);transform-origin:0.50px 0;-webkit-text-stroke:0.12px currentColor;">Select</div>
<div style="position:absolute;left:1164.20px;top:414.32px;font-size:11.5px;line-height:15px;font-weight:normal;color:#111;transform:scaleX(1.0635);transform-origin:0.50px 0;-webkit-text-stroke:0.12px currentColor;">Select</div>
<div style="position:absolute;left:356.00px;top:445.32px;font-size:11.5px;line-height:15px;font-weight:normal;color:#222;transform:scaleX(1.1133);transform-origin:1.00px 0;-webkit-text-stroke:0.12px currentColor;">External Rotation</div>
<div style="position:absolute;left:737.20px;top:445.32px;font-size:11.5px;line-height:15px;font-weight:normal;color:#111;transform:scaleX(1.0635);transform-origin:0.50px 0;-webkit-text-stroke:0.12px currentColor;">Select</div>
<div style="position:absolute;left:1164.20px;top:445.32px;font-size:11.5px;line-height:15px;font-weight:normal;color:#111;transform:scaleX(1.0635);transform-origin:0.50px 0;-webkit-text-stroke:0.12px currentColor;">Select</div>
<div style="position:absolute;left:357.00px;top:475.32px;font-size:11.5px;line-height:15px;font-weight:normal;color:#222;transform:scaleX(1.0693);transform-origin:0.00px 0;-webkit-text-stroke:0.12px currentColor;">Abduction</div>
<div style="position:absolute;left:737.20px;top:475.32px;font-size:11.5px;line-height:15px;font-weight:normal;color:#111;transform:scaleX(1.0635);transform-origin:0.50px 0;-webkit-text-stroke:0.12px currentColor;">Select</div>
<div style="position:absolute;left:1164.20px;top:475.32px;font-size:11.5px;line-height:15px;font-weight:normal;color:#111;transform:scaleX(1.0635);transform-origin:0.50px 0;-webkit-text-stroke:0.12px currentColor;">Select</div>
<div style="position:absolute;left:357.00px;top:505.32px;font-size:11.5px;line-height:15px;font-weight:normal;color:#222;transform:scaleX(1.0693);transform-origin:0.00px 0;-webkit-text-stroke:0.12px currentColor;">Adduction</div>
<div style="position:absolute;left:737.20px;top:505.32px;font-size:11.5px;line-height:15px;font-weight:normal;color:#111;transform:scaleX(1.0635);transform-origin:0.50px 0;-webkit-text-stroke:0.12px currentColor;">Select</div>
<div style="position:absolute;left:1164.20px;top:505.32px;font-size:11.5px;line-height:15px;font-weight:normal;color:#111;transform:scaleX(1.0635);transform-origin:0.50px 0;-webkit-text-stroke:0.12px currentColor;">Select</div>
<div style="position:absolute;left:357.20px;top:528.02px;font-size:11.5px;line-height:15px;font-weight:normal;color:#222;transform:scaleX(1.1130);transform-origin:0.00px 0;-webkit-text-stroke:0.12px currentColor;">Additional Comments:</div>
<div style="position:absolute;left:448px;top:333px;width:699px;height:213px;border:3px solid #ff0000;border-radius:2px"></div>
<div style="position:absolute;left:12px;top:265px;width:102px;height:21px;border:3px solid #ff0000;border-radius:3px"></div>
<div style="position:absolute;left:1240px;top:583px;width:86px;height:37px;border-radius:19px;background:#7b9c05"></div>
<svg style="position:absolute;left:1257px;top:593px" width="18" height="18"><circle cx="8.8" cy="8.8" r="7.3" fill="none" stroke="#2b3300" stroke-width="1.6"/><text x="8.8" y="13" font-family="Liberation Sans" font-weight="bold" font-size="11" text-anchor="middle" fill="#2b3300">?</text></svg>
<div style="position:absolute;left:1343px;top:0px;width:16px;height:624px;background:#fff"></div>
<div style="position:absolute;left:1344px;top:3px;width:15px;height:621px;background:#efefef"></div>
<div style="position:absolute;left:1344px;top:21px;width:15px;height:430px;background:#cacaca"></div>
<svg style="position:absolute;left:1347px;top:9px" width="9" height="8"><path d="M1 6.2 L4.5 2.2 L8 6.2" fill="none" stroke="#505050" stroke-width="2.1"/></svg>
<svg style="position:absolute;left:1347px;top:618px" width="9" height="8"><path d="M1 1 L4.5 5 L8 1" fill="none" stroke="#505050" stroke-width="2.1"/></svg>
<div style="position:absolute;left:1280.05px;top:594.30px;font-size:13px;line-height:17px;font-weight:bold;color:#2b3300;transform:scaleX(0.9815);transform-origin:0.75px 0;-webkit-text-stroke:0.12px currentColor;">Help</div>
</body></html>
